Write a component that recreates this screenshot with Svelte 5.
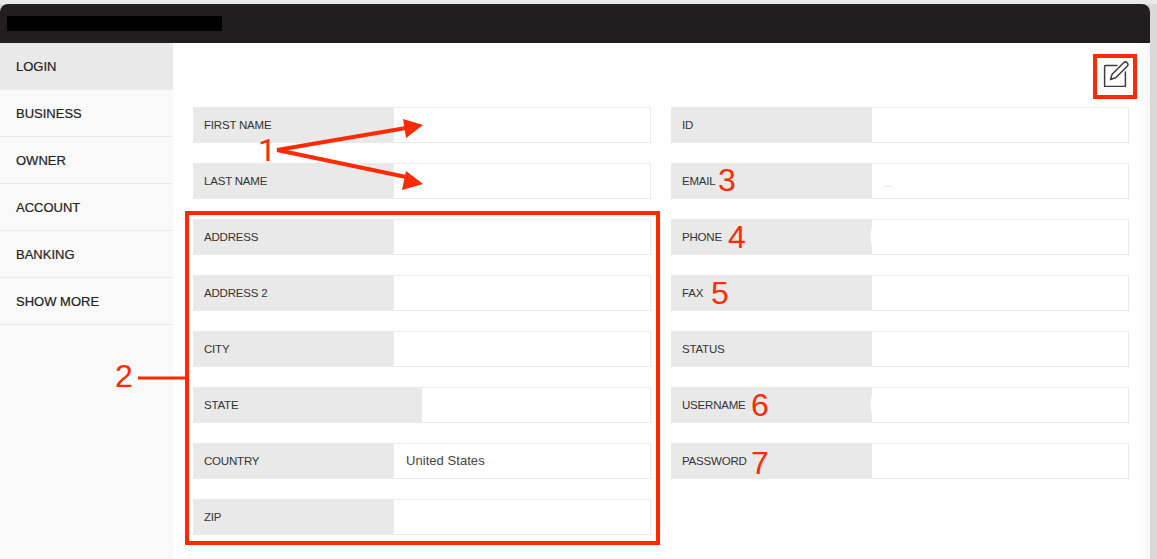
<script>
  const left = [
    { label: 'FIRST NAME' },
    { label: 'LAST NAME' },
    { label: 'ADDRESS' },
    { label: 'ADDRESS 2' },
    { label: 'CITY' },
    { label: 'STATE', wide: true },
    { label: 'COUNTRY', value: 'United States' },
    { label: 'ZIP' }
  ];
  const right = [
    { label: 'ID' },
    { label: 'EMAIL', mark: true },
    { label: 'PHONE', notch: true },
    { label: 'FAX' },
    { label: 'STATUS' },
    { label: 'USERNAME', notch: true },
    { label: 'PASSWORD' }
  ];
  const menu = ['LOGIN', 'BUSINESS', 'OWNER', 'ACCOUNT', 'BANKING', 'SHOW MORE'];
  const numbers = [
    { n: 1, x: 258, y: 132 },
    { n: 2, x: 115, y: 358 },
    { n: 3, x: 718, y: 162 },
    { n: 4, x: 728, y: 219 },
    { n: 5, x: 711, y: 275 },
    { n: 6, x: 751, y: 387 },
    { n: 7, x: 751, y: 445 }
  ];
</script>

<div class="page">
  <div class="window">
    <header class="topbar">
      <div class="redacted"></div>
    </header>
    <div class="body">
      <nav class="sidebar">
        {#each menu as item, i}
          <div class="item" class:active={i === 0}>{item}</div>
        {/each}
      </nav>
      <main class="content">
        <div class="tools">
          <svg class="edit" viewBox="0 0 26 26" width="26" height="26" fill="none" stroke="#3c3c3c" stroke-width="1.5" stroke-linejoin="round" stroke-linecap="round">
            <path d="M14 4.5H2.6a1 1 0 0 0-1 1V25a.6.6 0 0 0 .6.6h19.6a.6.6 0 0 0 .6-.6V11" />
            <path d="M7.5 18.5l1.6-5.2L20.6 1.8a2 2 0 0 1 3.6 3.4L12.7 16.8z" />
          </svg>
        </div>
        <div class="columns">
          {#each [left, right] as column}
            <div class="column">
              {#each column as row}
                <div class="row">
                  <div class="label" class:wide={row.wide}>{row.label}</div>
                  <div class="value" class:notch={row.notch}>
                    {#if row.value}{row.value}{/if}
                    {#if row.mark}<span class="mark"></span>{/if}
                  </div>
                </div>
              {/each}
            </div>
          {/each}
        </div>
      </main>
    </div>
  </div>

  <svg class="marks" width="1157" height="559" viewBox="0 0 1157 559">
    <rect x="1095" y="56" width="40" height="41" fill="none" stroke="#ff2a00" stroke-width="4" />
    <rect x="187" y="213" width="471" height="330" fill="none" stroke="#ff2a00" stroke-width="4" />
    <path d="M138 378H186" stroke="#ff2a00" stroke-width="3" />
    <path d="M277 150L406 128M277 150L406 177" stroke="#ff2a00" stroke-width="4" fill="none" />
    <path d="M403 119L423 125L406 138z" fill="#ff2a00" />
    <path d="M406 171L423 184L402 190z" fill="#ff2a00" />
  </svg>
  {#each numbers as item}
    <span class="number" class:plain={item.n === 1} style="left: {item.x}px; top: {item.y}px">{item.n}</span>
  {/each}
</div>

<style>
  :global(body) {
    margin: 0;
    background: #dcdcdc;
  }

  .page {
    position: relative;
    width: 1157px;
    height: 559px;
    overflow: hidden;
    padding-top: 4px;
    box-sizing: border-box;
    background: linear-gradient(#e9e9e9 0 4px, #d9d9d9 4px);
    font-family: "Liberation Sans", Arial, sans-serif;
  }

  .window {
    width: 1150px;
    height: 555px;
    display: flex;
    flex-direction: column;
    background: #fff;
    border-radius: 8px 8px 0 0;
    overflow: hidden;
  }

  .topbar {
    height: 39px;
    flex: none;
    display: flex;
    align-items: center;
    padding-left: 7px;
    background: #201e1f;
  }

  .redacted {
    width: 215px;
    height: 15px;
    background: #000;
  }

  .body {
    flex: 1;
    display: flex;
    background: linear-gradient(to right, #fff 1135px, #f8f8f8);
  }

  .sidebar {
    width: 173px;
    flex: none;
    background: #f9f9f9;
  }

  .item {
    height: 46px;
    line-height: 48px;
    padding-left: 16px;
    border-bottom: 1px solid #e9e9e9;
    font-size: 13px;
    color: #222;
    -webkit-text-stroke: 0.2px #222;
  }

  .item.active {
    background: #e9e9e9;
  }

  .content {
    flex: 1;
    padding: 0 21px 0 20px;
  }

  .tools {
    height: 64px;
    position: relative;
  }

  .edit {
    position: absolute;
    right: 0;
    top: 18px;
  }

  .columns {
    display: grid;
    grid-template-columns: 458px 458px;
    column-gap: 20px;
  }

  .column {
    display: flex;
    flex-direction: column;
    gap: 20px;
  }

  .row {
    display: flex;
    height: 36px;
  }

  .label {
    width: 190px;
    flex: none;
    padding-left: 11px;
    line-height: 36px;
    font-size: 11.5px;
    letter-spacing: -0.2px;
    color: #333;
    background: #e9e9e9;
  }

  .label.wide {
    width: 218px;
  }

  .value {
    flex: 1;
    position: relative;
    padding-left: 12px;
    line-height: 34px;
    font-size: 13px;
    letter-spacing: 0.05px;
    color: #444;
    border: 1px solid #e9e9e9;
    border-left: none;
  }

  .value.notch::before {
    content: '';
    position: absolute;
    left: -1px;
    top: 9px;
    width: 1px;
    height: 16px;
    background: #fff;
  }

  .mark {
    position: absolute;
    left: 13px;
    top: 22px;
    width: 6px;
    height: 1px;
    background: #e4e4e4;
  }

  .marks {
    position: absolute;
    left: 0;
    top: 0;
  }

  .number {
    position: absolute;
    font-size: 32px;
    line-height: 37px;
    color: #ff2a00;
  }

  .number.plain {
    font-family: Roboto, sans-serif;
    font-weight: 400;
  }
</style>
